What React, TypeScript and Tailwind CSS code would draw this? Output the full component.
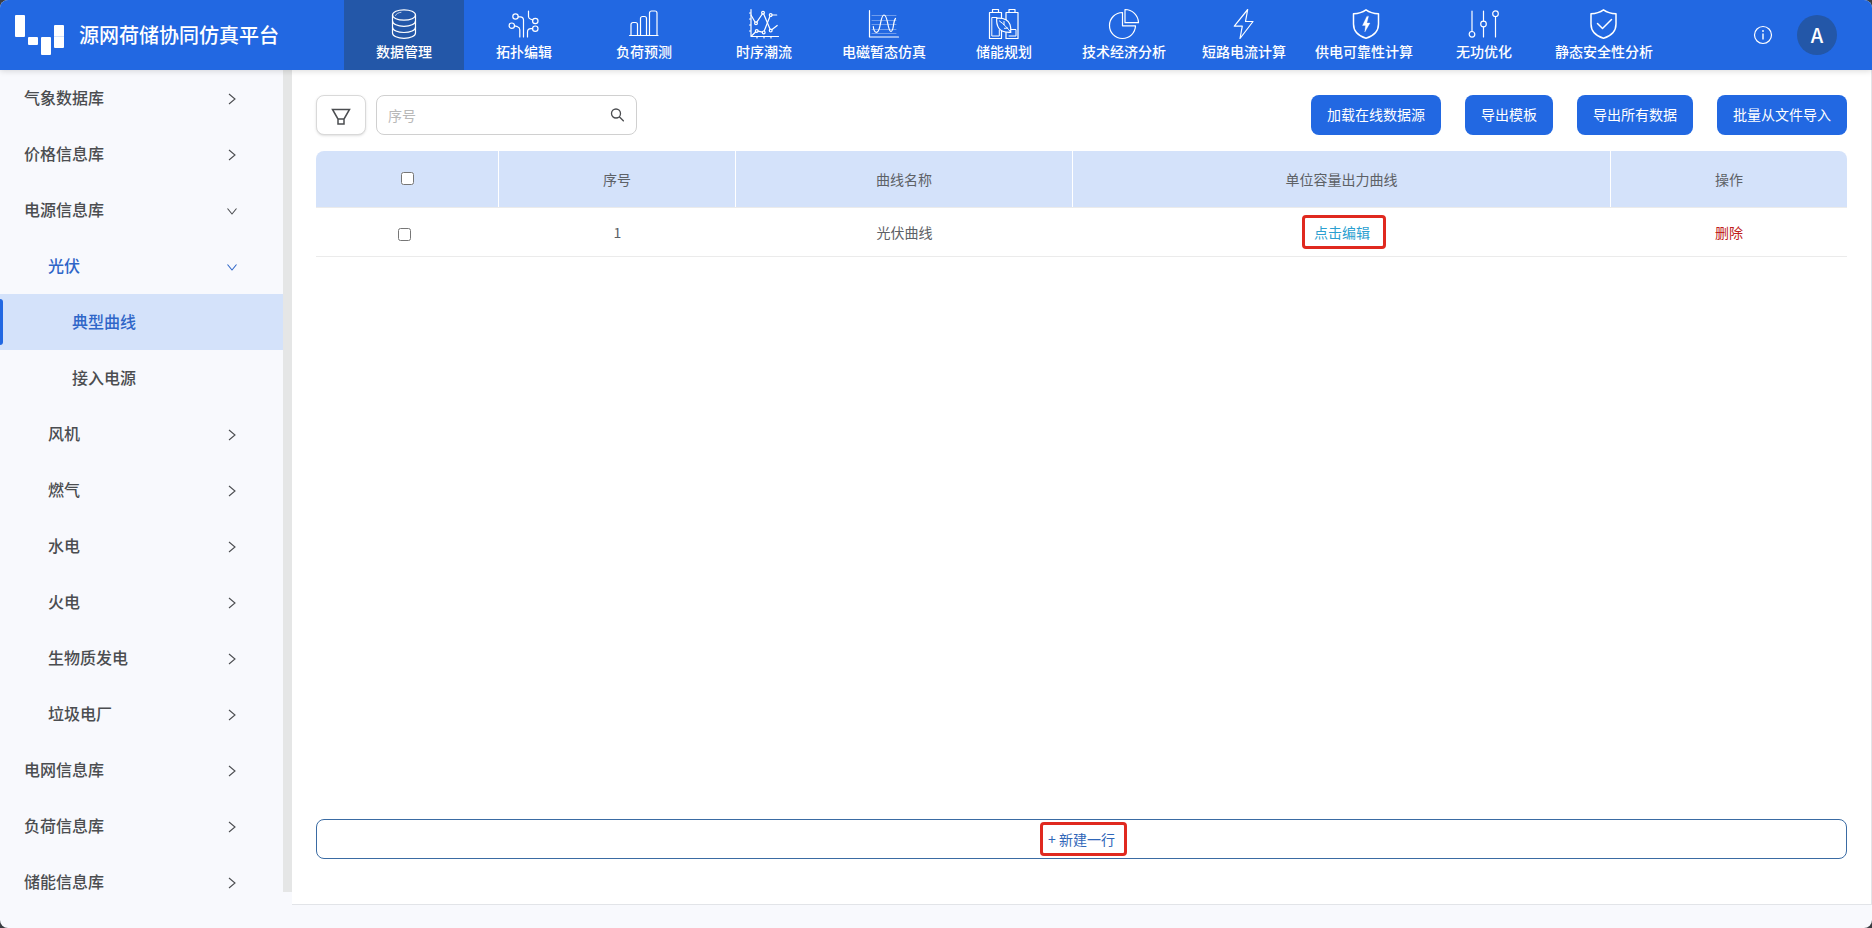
import { FC, ReactNode, useState } from "react";
import clsx from "clsx";

const Icon: FC<{ children: ReactNode }> = ({ children }) => (
  <svg
    className="size-[30px]"
    viewBox="0 0 30 30"
    fill="none"
    stroke="currentColor"
    strokeWidth="1.2"
    strokeLinecap="round"
    strokeLinejoin="round"
    overflow="visible"
    aria-hidden="true"
  >
    {children}
  </svg>
);

const modules = [
  {
    label: "数据管理",
    icon: (
      <Icon>
        <ellipse cx="15" cy="6" rx="11.5" ry="5.2" />
        <path d="M3.5 6v18c0 3 5.2 5.3 11.5 5.3S26.5 27 26.5 24V6" />
        <path d="M3.5 12c0 3 5.2 5.3 11.5 5.3S26.5 15 26.5 12M3.5 18.2c0 3 5.2 5.3 11.5 5.3s11.5-2.3 11.5-5.3" />
        <path d="M6.5 6.5c.6-1.8 3-2.9 5.5-3.2" strokeWidth=".7" />
      </Icon>
    ),
  },
  {
    label: "拓扑编辑",
    icon: (
      <Icon>
        <circle cx="6.5" cy="7.5" r="2.7" />
        <circle cx="2.8" cy="16.7" r="2.7" />
        <circle cx="26.3" cy="12" r="2.7" />
        <circle cx="26.3" cy="19.7" r="2.7" />
        <path d="M9.2 7.8h2c2 0 3.3 1.3 3.3 3.2v17M5.5 16.9l3 .8c1.6.5 2.3 1.4 2.3 3V28" />
        <path d="M19.5 2v5.5c0 1.3.6 2 1.8 2.5l2.5 1M23.6 19.7h-1.8c-2 0-3.3 1.3-3.3 3.3v5" />
      </Icon>
    ),
  },
  {
    label: "负荷预测",
    icon: (
      <Icon>
        <path d="M.5 26.5h28.5" />
        <path d="M2 26.5v-11a2 2 0 0 1 2-2h2.5a2 2 0 0 1 2 2v11M11.5 26.5v-17a2 2 0 0 1 2-2h2a2 2 0 0 1 2 2v17M20.5 26.5V4a2 2 0 0 1 2-2H26a2 2 0 0 1 2 2v22.5" />
      </Icon>
    ),
  },
  {
    label: "时序潮流",
    icon: (
      <Icon>
        <path d="M2 .5v27h27.500M.5 4H2M.5 10H2M.5 16H2M.5 22H2M8 27.500V29M15 27.500V29M22 27.500V29" />
        <path d="M2 6l4 7M7.800 13.200l5.500-8.200M14.700 5l6.500 15.500M22.700 20.700l5.500-4.200" />
        <path d="M2.500 27l4.300-4.200M9 22.200l4.400 1M15.200 22L21 7.300M23 6h4.700" />
        <circle cx="7" cy="14.2" r="1.4" />
        <circle cx="14" cy="3.8" r="1.4" />
        <circle cx="21.7" cy="21.6" r="1.4" />
        <circle cx="7.7" cy="22" r="1.4" />
        <circle cx="14.7" cy="23.4" r="1.4" />
        <circle cx="21.7" cy="6" r="1.4" />
      </Icon>
    ),
  },
  {
    label: "电磁暂态仿真",
    icon: (
      <Icon>
        <path d="M.5 1.5V28h29" />
        <path
          d="M3 6.500h24M3 11.500h24M3 15.500h24M3 20.500h24M3 24.500h24"
          strokeWidth=".5"
          opacity=".7"
        />
        <path d="M4.300 17.500c.3 3.500 1.500 5.800 3.400 5.800C12 23.300 11 6 15 6s3.500 16.500 7 16.500c3 0 1.800-10 4.500-13" />
      </Icon>
    ),
  },
  {
    label: "储能规划",
    icon: (
      <Icon>
        <path d="M3.5 3.5v-3h6v3M20 3.5v-3h6v3" />
        <path d="M.5 3.500h12v26H.5zM17 3.500h12v26H17z" />
        <path d="M8 8.500H2.800V27h7.500v-6M20 27h7v-6.500h-6" strokeWidth="1" />
        <path
          d="M7.700 9.300c6.300-.5 11.500 1.700 13.300 6.200.9 2.400.9 5 .7 7.800-5.500.3-9.700-.8-12-4.300-1.800-2.800-2.300-6-2-9.700z"
          fill="#2268e2"
        />
        <path d="M10.500 12c4.500 3.300 8.200 7 11.200 11.300M15 15.700v-3.200M15.500 19.300l3-.2" strokeWidth="1" />
      </Icon>
    ),
  },
  {
    label: "技术经济分析",
    icon: (
      <Icon>
        <path d="M13.500 3.500v13.300h13a13 13 0 1 1-13-13.300z" />
        <path d="M16 .5v13.200h13.500A13.500 13.500 0 0 0 16 .5z" />
      </Icon>
    ),
  },
  {
    label: "短路电流计算",
    icon: (
      <Icon>
        <path d="M18.700.5L5.300 17.200h8L11 29.500 24 12.500h-7.500z" />
      </Icon>
    ),
  },
  {
    label: "供电可靠性计算",
    icon: (
      <Icon>
        <path
          d="M17 .8c3.500 2.500 8 3.700 12.500 3.900V15c0 7-5 12-12.500 14.300C9.500 27 4.500 22 4.500 15V4.700C9 4.500 13.500 3.300 17 .8z"
          strokeWidth="1.5"
        />
        <path
          d="M17.800 7.500l-4.300 9h3L15.800 23l5.200-9h-3.200l1.700-6.500z"
          fill="currentColor"
          strokeWidth=".3"
        />
      </Icon>
    ),
  },
  {
    label: "无功优化",
    icon: (
      <Icon>
        <path d="M3 2v20.500M14.500 2v10M14.500 18v10M26.500 7.500V28" />
        <circle cx="3" cy="25.3" r="2.8" />
        <circle cx="14.5" cy="15" r="2.8" />
        <circle cx="26.5" cy="4.7" r="2.8" />
      </Icon>
    ),
  },
  {
    label: "静态安全性分析",
    icon: (
      <Icon>
        <g strokeWidth="1.5">
          <path d="M14.5.8C18 3.300 22.500 4.500 27 4.700V15c0 7-5 12-12.500 14.300C7 27 2 22 2 15V4.700c4.500-.2 9-1.400 12.500-3.900z" />
          <path d="M8.500 14.500l5 5 9-9" />
        </g>
      </Icon>
    ),
  },
];

type MenuItem = { label: string; level: 1 | 2 | 3; open?: boolean };

const menu: MenuItem[] = [
  { label: "气象数据库", level: 1 },
  { label: "价格信息库", level: 1 },
  { label: "电源信息库", level: 1, open: true },
  { label: "光伏", level: 2, open: true },
  { label: "典型曲线", level: 3 },
  { label: "接入电源", level: 3 },
  { label: "风机", level: 2 },
  { label: "燃气", level: 2 },
  { label: "水电", level: 2 },
  { label: "火电", level: 2 },
  { label: "生物质发电", level: 2 },
  { label: "垃圾电厂", level: 2 },
  { label: "电网信息库", level: 1 },
  { label: "负荷信息库", level: 1 },
  { label: "储能信息库", level: 1 },
];

const indent = { 1: "pl-6", 2: "pl-12", 3: "pl-18" };

const actions = ["加载在线数据源", "导出模板", "导出所有数据", "批量从文件导入"];

const columns = ["序号", "曲线名称", "单位容量出力曲线", "操作"];

const Chevron: FC<{ open?: boolean }> = ({ open }) => (
  <svg
    className="mt-1 size-3"
    viewBox="0 0 12 12"
    fill="none"
    stroke="currentColor"
    strokeWidth="1.1"
    aria-hidden="true"
  >
    <path d={open ? "M1.500 3.500L6 9l4.500-5.500" : "M3 1l6 5-6 5"} />
  </svg>
);

const Header: FC = () => (
  <header className="relative z-10 flex h-[70px] shrink-0 items-center bg-[#2268e2] text-white shadow-[0_1px_6px_rgba(0,0,0,0.15)]">
    <div className="flex w-[344px] shrink-0 items-center gap-[15px] pl-[15px]">
      <svg className="h-10 w-[49px]" viewBox="0 0 49 40" fill="white" aria-hidden="true">
        <rect x="0" y="0" width="10" height="22" rx="1" />
        <rect x="13" y="22" width="10" height="8" rx="1" />
        <rect x="26" y="22" width="10" height="18" rx="1" />
        <rect x="39" y="10" width="10" height="23" rx="1" />
        <path d="M39 21.500h10" stroke="#b9cff6" strokeWidth=".6" />
      </svg>
      <h1 className="text-xl font-medium">源网荷储协同仿真平台</h1>
    </div>
    <nav className="flex h-full">
      {modules.map((item, i) => (
        <a
          key={item.label}
          href="#"
          className={clsx(
            "flex w-[120px] flex-col items-center gap-0.5 pt-[9px] text-sm leading-5 font-medium whitespace-nowrap",
            i === 0 && "bg-[#2357a8]",
          )}
        >
          {item.icon}
          {item.label}
        </a>
      ))}
    </nav>
    <div className="ml-auto flex items-center gap-6 pr-[35px]">
      <button type="button" aria-label="关于">
        <svg className="size-5" viewBox="0 0 20 20" fill="none" stroke="currentColor" strokeWidth="1.2">
          <circle cx="10" cy="10" r="8.5" />
          <path d="M10 8.500v6" strokeWidth="1.4" />
          <circle cx="10" cy="6" r=".9" fill="currentColor" stroke="none" />
        </svg>
      </button>
      <button
        type="button"
        className="flex size-10 items-center justify-center rounded-full bg-[#2357a8] text-xl font-medium"
      >
        A
      </button>
    </div>
  </header>
);

const Sidebar: FC = () => (
  <aside className="mb-9 flex w-[292px] shrink-0 overflow-hidden border-r-[9px] border-[#e5e6e6]">
    <ul className="w-full">
      {menu.map((item) => {
        const active = item.label === "典型曲线";
        return (
          <li key={item.label}>
            <a
              href="#"
              className={clsx(
                "relative flex h-14 items-center justify-between pr-[45px] pb-0.5 text-base leading-5 font-medium",
                indent[item.level],
                active || item.label === "光伏" ? "text-[#2f66c8]" : "text-[#4b4d50]",
                active && "bg-[#d4e2fa]",
              )}
            >
              {active && (
                <span className="absolute inset-y-[5px] left-0 w-[3px] rounded-r-sm bg-[#2268e2]" />
              )}
              {item.label}
              {item.level < 3 && <Chevron open={item.open} />}
            </a>
          </li>
        );
      })}
    </ul>
  </aside>
);

const Toolbar: FC = () => (
  <div className="flex items-center">
    <button
      type="button"
      aria-label="筛选"
      className="flex h-10 w-[50px] items-center justify-center rounded-lg border border-[#d9d9d9] bg-white text-[#4b4d50] shadow-sm"
    >
      <svg className="size-5" viewBox="0 0 20 20" fill="none" stroke="currentColor" strokeWidth="1.5">
        <path d="M1.500 4.500h17L13 14v5H7v-5zM7 14h6" />
      </svg>
    </button>
    <label className="ml-2.5 flex h-10 w-[261px] items-center rounded-lg border border-[#d0d0d0] bg-white pr-3 pl-[11px]">
      <input
        type="text"
        aria-label="序号"
        placeholder="序号"
        className="min-w-0 flex-1 text-sm text-[#4b4d50] outline-none placeholder:text-[#b8b8b8]"
      />
      <svg
        className="size-3.5 text-[#4b4d50]"
        viewBox="0 0 14 14"
        fill="none"
        stroke="currentColor"
        strokeWidth="1.3"
        aria-hidden="true"
      >
        <circle cx="6" cy="5.5" r="4.5" />
        <path d="M9.300 8.800l4.500 4.500" />
      </svg>
    </label>
    <div className="ml-auto flex gap-6">
      {actions.map((label) => (
        <button key={label} type="button" className="h-10 rounded-lg bg-[#2268e2] px-4 pb-0.5 text-sm text-white">
          {label}
        </button>
      ))}
    </div>
  </div>
);

// red frame drawn around the text it sits in
const Highlight: FC = () => (
  <span className="absolute -inset-y-[7px] -right-4 -left-3 rounded-sm border-[3px] border-[#e0291f]" />
);

const CurveTable: FC = () => {
  const [checked, setChecked] = useState(false);

  return (
    <table className="mt-4 w-full table-fixed border-separate border-spacing-0 text-center text-sm text-[#5d6166]">
      <colgroup>
        <col className="w-[183px]" />
        <col className="w-[237px]" />
        <col className="w-[337px]" />
        <col className="w-[538px]" />
        <col className="w-[236px]" />
      </colgroup>
      <thead>
        <tr className="h-14">
          <th className="rounded-tl-lg border-r border-white bg-[#d4e2fa] pb-1.5">
            <input
              type="checkbox"
              aria-label="全选"
              className="size-[13px] align-middle"
              checked={checked}
              onChange={(e) => setChecked(e.target.checked)}
            />
          </th>
          {columns.map((name) => (
            <th
              key={name}
              className="border-r border-white bg-[#d4e2fa] font-normal last:rounded-tr-lg last:border-r-0"
            >
              {name}
            </th>
          ))}
        </tr>
      </thead>
      <tbody>
        <tr className="h-[50px] *:border-t *:border-b *:border-[#ebebeb]">
          <td className="pr-1.5">
            <input
              type="checkbox"
              aria-label="选择第 1 行"
              className="size-[13px] align-middle"
              checked={checked}
              onChange={(e) => setChecked(e.target.checked)}
            />
          </td>
          <td>1</td>
          <td>光伏曲线</td>
          <td>
            <a href="#" className="relative inline-block leading-5 text-[#2b9fd0]">
              点击编辑
              <Highlight />
            </a>
          </td>
          <td>
            <button type="button" className="text-[#c02020]">
              删除
            </button>
          </td>
        </tr>
      </tbody>
    </table>
  );
};

const App: FC = () => {
  return (
    <div className="bg-[#3a3d42] font-['Noto_Sans_CJK_SC',sans-serif]">
      <div className="flex h-screen flex-col overflow-hidden rounded-lg bg-[#f8f9fd]">
        <Header />
        <div className="flex min-h-0 flex-1">
          <Sidebar />
          <main className="mb-[23px] flex min-w-0 flex-1 flex-col border-r border-b border-[#e2e4e8] bg-white px-6 pt-[25px] pb-[45px]">
            <Toolbar />
            <CurveTable />
            <button
              type="button"
              className="mt-auto flex h-10 items-center justify-center rounded-lg border border-[#3a6ba3] text-sm text-[#2f66b8]"
            >
              <span className="relative px-0.5 leading-5">
                + 新建一行
                <span className="absolute -inset-y-[7px] -right-2.5 -left-1.5 rounded-sm border-[3px] border-[#e0291f]" />
              </span>
            </button>
          </main>
        </div>
      </div>
    </div>
  );
};

export default App;
